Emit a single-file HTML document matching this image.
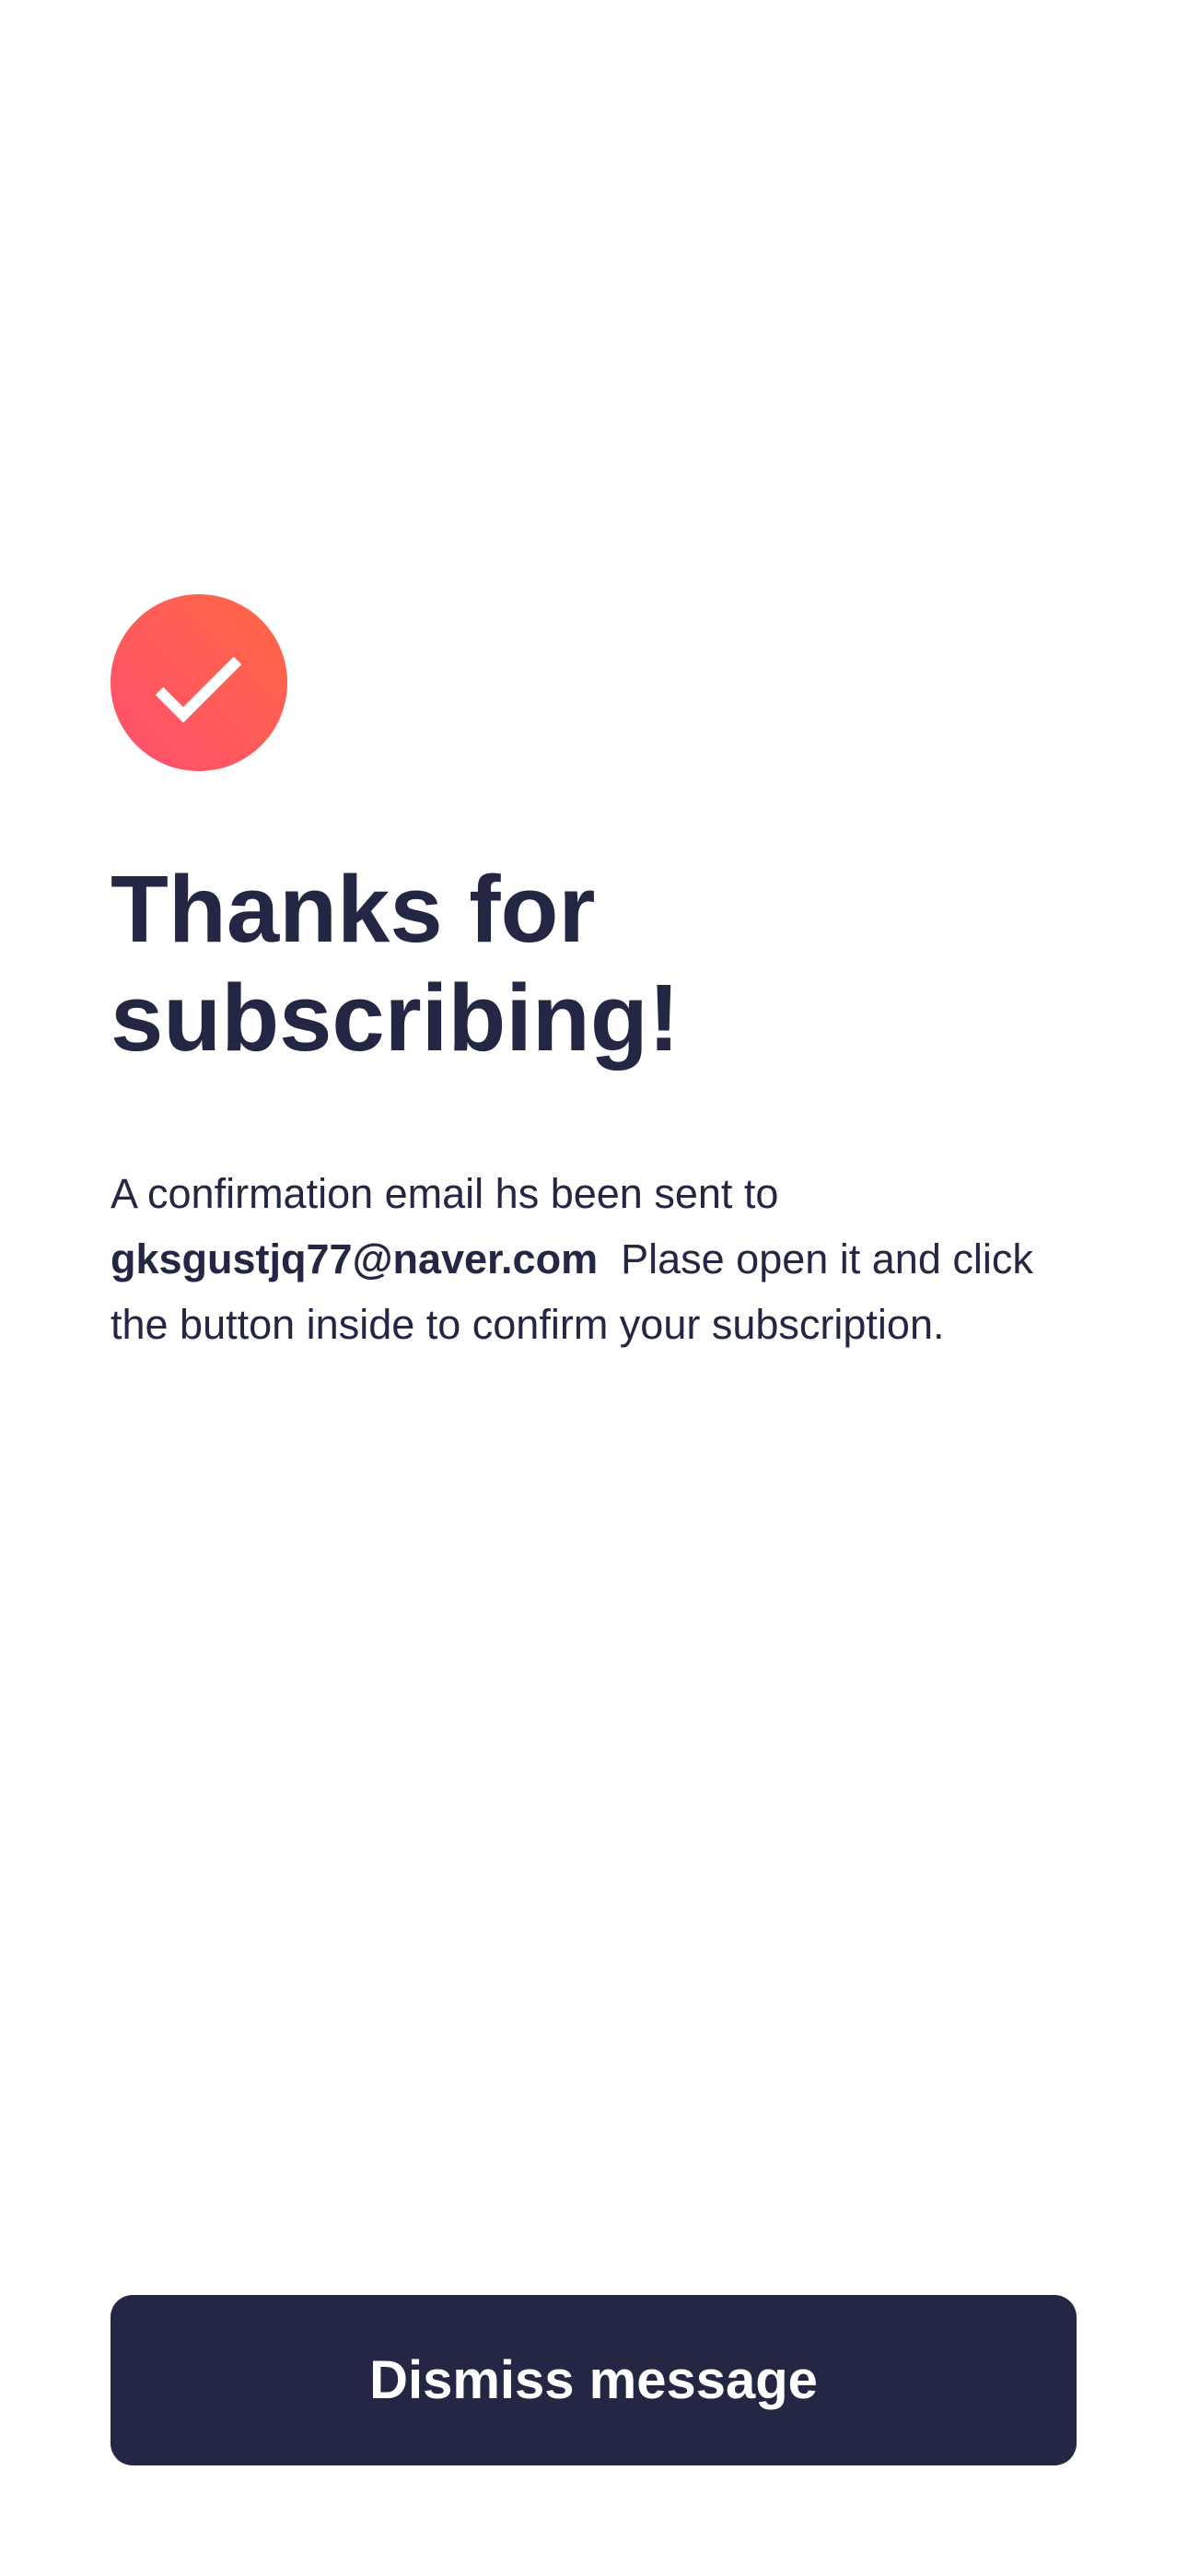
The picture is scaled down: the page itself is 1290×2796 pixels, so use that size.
<!DOCTYPE html>
<html><head><meta charset="utf-8"><style>
html,body{margin:0;padding:0;background:#fff;}
body{width:1290px;height:2796px;position:relative;font-family:"Liberation Sans",sans-serif;color:#232743;}
.c{position:absolute;left:120px;top:645px;width:192px;height:192px;border-radius:50%;background:linear-gradient(225deg,#ff6842 0%,#ff5a5c 55%,#ff4f6e 100%);}
h1{position:absolute;left:120px;top:928px;margin:0;font-size:103px;line-height:118px;font-weight:700;letter-spacing:0px;}
p{position:absolute;left:120px;top:1260px;margin:0;font-size:45px;line-height:71px;width:1049px;}
.b{position:absolute;left:120px;top:2491px;width:1049px;height:185px;border-radius:24px;background:#232743;color:#fff;font-weight:700;font-size:58px;text-align:center;line-height:185px;}
</style></head><body>
<div class="c"><svg width="192" height="192" viewBox="0 0 192 192"><path d="M53 105 L79 131 L138 72" fill="none" stroke="#fff" stroke-width="12"/></svg></div>
<h1>Thanks for<br>subscribing!</h1>
<p>A confirmation email hs been sent to <b>gksgustjq77@naver.com</b>&nbsp; Plase open it and click the button inside to confirm your subscription.</p>
<div class="b">Dismiss message</div>
</body></html>
